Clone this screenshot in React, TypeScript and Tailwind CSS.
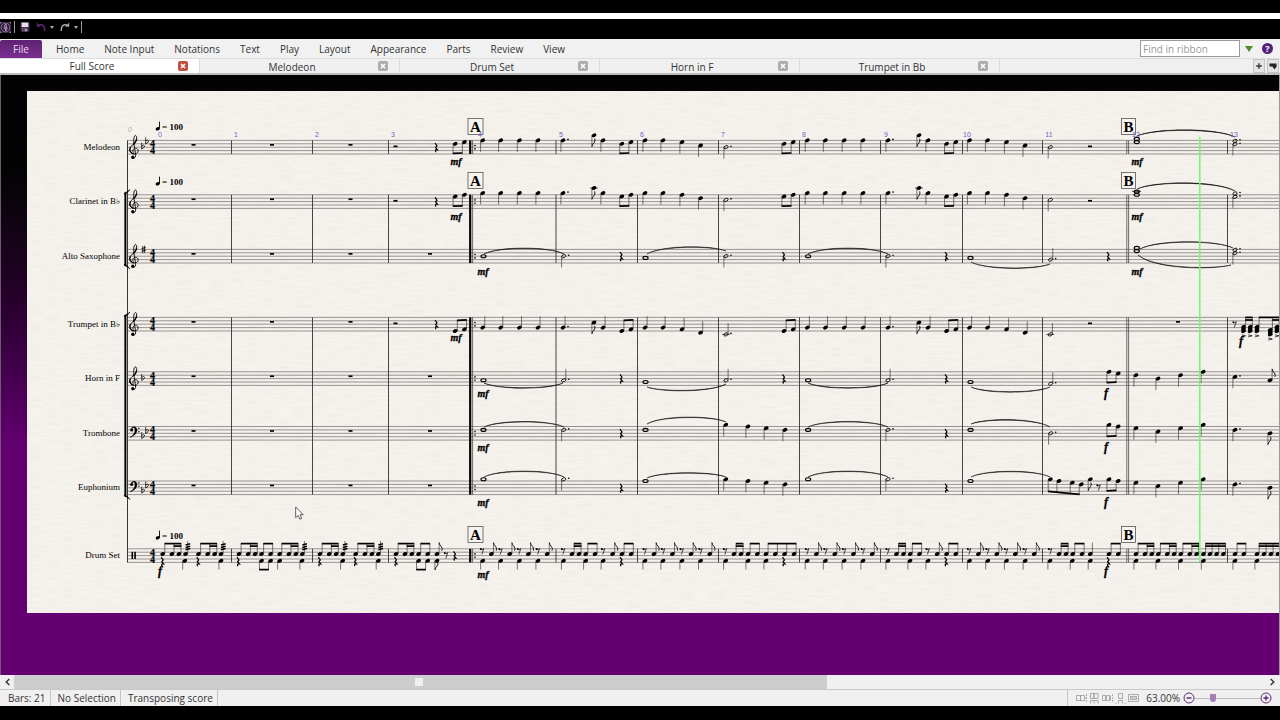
import { useState, type ReactNode } from 'react';
import { Plus } from 'lucide-react';

const MENUS = ['Home', 'Note Input', 'Notations', 'Text', 'Play', 'Layout', 'Appearance', 'Parts', 'Review', 'View'];
const TABS = ['Full Score', 'Melodeon', 'Drum Set', 'Horn in F', 'Trumpet in Bb'];

// Half the distance between two staff lines
const STEP = 1.7;

interface Staff {
  name: string;
  top: number;
  clef: 'treble' | 'bass' | 'drum';
}

const STAVES: Staff[] = [
  { name: 'Melodeon', top: 140.4, clef: 'treble' },
  { name: 'Clarinet in B♭', top: 194.8, clef: 'treble' },
  { name: 'Alto Saxophone', top: 249.4, clef: 'treble' },
  { name: 'Trumpet in B♭', top: 317.4, clef: 'treble' },
  { name: 'Horn in F', top: 371.8, clef: 'treble' },
  { name: 'Trombone', top: 426.5, clef: 'bass' },
  { name: 'Euphonium', top: 481, clef: 'bass' },
  { name: 'Drum Set', top: 548.8, clef: 'drum' },
];
const [MEL, CLA, ALT, TRP, HRN, TBN, EUP, DRM] = STAVES.map((s) => s.top);

const GROUPS = [
  [MEL, MEL],
  [CLA, ALT],
  [TRP, EUP],
  [DRM, DRM],
];
const BARLINES = [231.5, 312.5, 388.5, 556, 637.5, 718.5, 799.5, 880.5, 962.5, 1042.5, 1227.5];
const BAR_NUMBERS = [160, 236, 317, 393, 480, 561, 642, 723, 804, 886, 967, 1049, 1136, 1234];

type Dir = 'up' | 'down';

interface NoteProps {
  x: number;
  y: number;
  dir?: Dir;
  hollow?: boolean;
  whole?: boolean;
  dot?: boolean;
  flag?: boolean;
  end?: number;
  ledger?: boolean;
}

function Note({ x, y, dir, hollow, whole, dot, flag, end, ledger }: NoteProps) {
  const side = dir === 'up' ? 1 : -1;
  const sx = x + side * 2.1;
  const tip = end ?? y - side * 11.4;
  return (
    <g>
      {whole ? (
        <ellipse cx={x + 0.5} cy={y} rx={2.6} ry={1.5} fill="none" stroke="#000" strokeWidth={1.1} />
      ) : (
        <ellipse
          cx={x}
          cy={y}
          rx={hollow ? 2.3 : 2.5}
          ry={hollow ? 1.4 : 1.8}
          transform={`rotate(-24 ${x} ${y})`}
          fill={hollow ? 'none' : '#000'}
          stroke="#000"
          strokeWidth={hollow ? 0.8 : 0}
        />
      )}
      {dir && <path d={`M${sx} ${y}V${tip}`} stroke="#222" strokeWidth={0.6} />}
      {dot && <circle cx={x + 5} cy={y - 1} r={0.8} />}
      {flag && (
        <path
          d={`M${sx} ${tip}q0.2 ${side * 2.2} 2.2 ${side * 4}q1.4 ${side * 1.6} 0.6 ${side * 4}`}
          fill="none"
          stroke="#000"
          strokeWidth={0.9}
        />
      )}
      {ledger && <path d={`M${x - 4} ${y}h8`} stroke="#000" strokeWidth={0.6} />}
    </g>
  );
}

function Beam({ x1, x2, y1, y2 = y1 }: { x1: number; x2: number; y1: number; y2?: number }) {
  return <path d={`M${x1} ${y1}L${x2} ${y2}`} stroke="#000" strokeWidth={1.7} />;
}

function Slur({ x1, y1, x2, y2, peak }: { x1: number; y1: number; x2: number; y2: number; peak: number }) {
  const c = (4 * peak - (y1 + y2) / 2) / 3;
  const a = x1 + (x2 - x1) * 0.18;
  const b = x2 - (x2 - x1) * 0.18;
  return (
    <path
      d={`M${x1} ${y1}C${a} ${c} ${b} ${c} ${x2} ${y2}C${b} ${c - 0.7} ${a} ${c - 0.7} ${x1} ${y1}`}
      fill="#111"
      stroke="#111"
      strokeWidth={0.5}
    />
  );
}

function QuarterRest({ x, y }: { x: number; y: number }) {
  return (
    <path
      d={`M${x - 1} ${y - 4.2}l2 2.8l-1.4 1.8l1.8 2.2q-3 -0.6 -1.4 2.4`}
      fill="none"
      stroke="#000"
      strokeWidth={1.2}
    />
  );
}

function EighthRest({ x, y }: { x: number; y: number }) {
  return (
    <g>
      <circle cx={x - 1.2} cy={y - 1.8} r={0.95} />
      <path d={`M${x - 1.4} ${y - 1.2}q2 0.6 3.2 -1.1l-2 6`} fill="none" stroke="#000" strokeWidth={0.7} />
    </g>
  );
}

function Rest({ x, y }: { x: number; y: number }) {
  return <rect x={x - 2} y={y} width={4} height={1.7} />;
}

function Flat({ x, y }: { x: number; y: number }) {
  return <path d={`M${x - 1.3} ${y - 4.5}v6.4q3 -1.6 2.9 -3.2q-0.6 -1.4 -2.9 0`} fill="none" stroke="#000" strokeWidth={0.75} />;
}

function Sharp({ x, y }: { x: number; y: number }) {
  return (
    <path
      d={`M${x - 0.8} ${y - 3.4}v7.2M${x + 1} ${y - 3.8}v7.2M${x - 2} ${y - 0.8}l4.2 -1M${x - 2} ${y + 1.8}l4.2 -1`}
      stroke="#000"
      strokeWidth={0.8}
    />
  );
}

function Clef({ kind, top }: { kind: Staff['clef']; top: number }) {
  if (kind === 'treble') {
    return (
      <g transform={`translate(134 ${top + 10.2})`} fill="none" stroke="#000" strokeWidth={0.9}>
        <path d="M-0.6 2.1C-2 0.4 -0.6 -2.5 1.6 -2.4C5.4 -2 5 3.3 0.5 3.4C-3.6 3.4 -5.4 -0.4 -3.4 -3.6C-1.4 -6.4 2.8 -8.6 2.7 -12.4C2.5 -15.8 0.9 -16 -0 -13C-1 -9.4 0.8 -2 1.6 4C2 7.8 -1 8.6 -2.4 7.2" />
        <path d="M-3.6 -3.2C-5 -0.6 -3.6 2.6 -0.4 3.2M-0.8 -5.8C1 -7.6 2.6 -9.4 2.6 -11.8" strokeWidth={1.2} />
        <circle cx={-1.2} cy={6.6} r={1.6} fill="#000" stroke="none" />
      </g>
    );
  }
  if (kind === 'bass') {
    return (
      <g transform={`translate(130 ${top})`}>
        <circle cx={1.7} cy={3.6} r={1.5} />
        <path d="M1 3C1 -0.6 7.4 -1 7 4C6.6 7.6 3.6 9.6 0 11C3.4 8.6 4.9 6.6 5 3.8C5.1 0.6 3 0.2 1 3Z" stroke="#000" strokeWidth={0.4} />
        <circle cx={8.9} cy={1.8} r={0.7} />
        <circle cx={8.9} cy={5.2} r={0.7} />
      </g>
    );
  }
  return (
    <g>
      <rect x={131.5} y={top + 3} width={1.6} height={7.2} />
      <rect x={134.3} y={top + 3} width={1.6} height={7.2} />
    </g>
  );
}

function Dynamic({ x, y, children }: { x: number; y: number; children: ReactNode }) {
  return (
    <text
      x={x}
      y={y}
      textAnchor="middle"
      stroke="#000"
      strokeWidth={0.3}
      className={`font-['Liberation_Serif',serif] font-bold italic ${children === 'f' ? 'text-[12px]' : 'text-[10px]'}`}
    >
      {children}
    </text>
  );
}

function Tempo({ y }: { y: number }) {
  return (
    <g>
      <ellipse cx={157.8} cy={y - 1.2} rx={2.2} ry={1.6} transform={`rotate(-24 157.8 ${y - 1.2})`} />
      <path d={`M159.5 ${y - 1.4}v-7`} stroke="#000" strokeWidth={0.9} />
      <text x={162} y={y} className="font-['Liberation_Serif',serif] text-[9px] font-bold">
        = 100
      </text>
    </g>
  );
}

function Rehearsal({ x, y, w, children }: { x: number; y: number; w: number; children: ReactNode }) {
  return (
    <g>
      <rect x={x - w / 2} y={y} width={w} height={16} fill="#f7f4ef" stroke="#555" strokeWidth={0.8} />
      <text x={x} y={y + 13} textAnchor="middle" className="font-['Liberation_Serif',serif] text-[15px] font-bold">
        {children}
      </text>
    </g>
  );
}

// Two beamed eighths with a common beam height
function Pair({ x, top, steps, dir, beam }: { x: number; top: number; steps: number[]; dir: Dir; beam: number }) {
  const d = dir === 'up' ? 2.1 : -2.1;
  return (
    <g>
      <Note x={x} y={top + steps[0] * STEP} dir={dir} end={beam} />
      <Note x={x + 9.2} y={top + steps[1] * STEP} dir={dir} end={beam} />
      <Beam x1={x + d - 0.3} x2={x + 9.5 + d} y1={beam} y2={dir === 'up' ? beam - 0.6 : beam - 0.4} />
    </g>
  );
}

// Melodeon, clarinet and trumpet all carry the tune at different heights
function Melody({ top, shift, dir }: { top: number; shift: number; dir: Dir }) {
  const y = (s: number) => top + (s + shift) * STEP;
  const beam = dir === 'up' ? top + 3 : top + 13 + shift * 1.6;
  const pair = (x: number) => <Pair key={x} x={x} top={top} steps={[2 + shift, 1 + shift]} dir={dir} beam={beam} />;
  return (
    <g>
      <Rest x={395.5} y={top + 5.1} />
      <QuarterRest x={436} y={top + 6.8} />
      {[455.2, 621.8, 784, 946.6].map(pair)}
      {[482.7, 500.7, 519.4, 538, 645, 663, 807.3, 825.4, 844.2, 863, 969.5, 987.5].map((x) => (
        <Note key={x} x={x} y={y(0)} dir={dir} />
      ))}
      {[563, 888].map((x) => (
        <g key={x}>
          <Note x={x} y={y(0)} dir={dir} dot />
          <Note x={x + 31} y={y(-3)} dir="down" flag ledger={shift === -1} />
          <Note x={x + 40} y={y(0)} dir={dir} />
        </g>
      ))}
      {[682, 1006.5].map((x) => (
        <g key={x}>
          <Note x={x} y={y(1)} dir={dir} />
          <Note x={x + 18.6} y={y(3)} dir={dir} />
        </g>
      ))}
      <Note x={726} y={y(4)} dir={dir} hollow dot ledger={shift === 6} />
      <Note x={1050.3} y={y(4)} dir={dir} hollow ledger={shift === 6} />
      <Rest x={1090} y={top + 5.1} />
    </g>
  );
}

interface HarmonyProps {
  top: number;
  steps: number[];
  dirs: Dir[];
  rests?: number[];
}

// Whole notes tied over to dotted halves
function Harmony({ top, steps, dirs, rests = [621, 783.5, 946] }: HarmonyProps) {
  const xs = [483, 563.7, 645, 726, 807.6, 888, 970, 1050.7];
  return (
    <g>
      {xs.map((x, i) =>
        steps[i] === 99 ? null : i % 2 === 0 ? (
          <Note key={x} x={x} y={top + steps[i] * STEP} whole />
        ) : (
          <Note key={x} x={x} y={top + steps[i] * STEP} dir={dirs[(i - 1) / 2]} hollow dot />
        ),
      )}
      {rests.map((x) => (
        <QuarterRest key={x} x={x} y={top + 6.8} />
      ))}
    </g>
  );
}

function Quarters({ top, notes }: { top: number; notes: number[][] }) {
  return (
    <g>
      {notes.map(([x, s]) => (
        <Note key={x} x={x} y={top + s * STEP} dir="down" />
      ))}
    </g>
  );
}

const HI = DRM + 5.2;
const LO = DRM + 12;
const DRUM_BEAM = 543.6;

// Beamed hits above the staff; `sixteenth` is the index where the second beam starts
function Hits({ xs, sixteenth }: { xs: number[]; sixteenth?: number }) {
  const last = xs[xs.length - 1] + 2.4;
  return (
    <g>
      {xs.map((x) => (
        <Note key={x} x={x} y={HI} dir="up" end={DRUM_BEAM} />
      ))}
      <Beam x1={xs[0] + 1.8} x2={last} y1={DRUM_BEAM} />
      {sixteenth !== undefined && <Beam x1={xs[sixteenth] + 1.8} x2={last} y1={DRUM_BEAM + 2.5} />}
    </g>
  );
}

function Tremolo({ x }: { x: number }) {
  return (
    <g>
      <Note x={x} y={HI} dir="up" end={541} />
      <path d={`M${x} 545l4.6 -1.2M${x} 547.4l4.6 -1.2M${x} 549.8l4.6 -1.2`} stroke="#000" strokeWidth={1.5} />
    </g>
  );
}

function Drums() {
  const kicks = [
    184.8, 221, 279.7, 302, 342.7, 378.3, 482.7, 500.7, 519.4, 538, 563.5, 585.7, 603.2, 645, 663, 682, 700.6, 725.7, 748, 766,
    807.3, 825.4, 844.2, 863, 888, 910, 928, 969.5, 987.8, 1006.5, 1025.2, 1050, 1072.3, 1090.3, 1136, 1158, 1180.6, 1203.4, 1235, 1257,
  ];
  return (
    <g>
      {[162.7, 198.5, 239, 279.7, 320, 355.7].map((x) => (
        <Hits key={x} xs={[x, x + 9.2, x + 16.2]} sixteenth={1} />
      ))}
      {[185.6, 221, 302.3, 342.8, 378.4].map((x) => (
        <Tremolo key={x} x={x} />
      ))}
      <Hits xs={[396, 405, 411.8]} sixteenth={1} />
      {[261.5, 418.6].map((x) => (
        <g key={x}>
          <Hits xs={[x, x + 9.1]} />
          <Note x={x} y={LO} dir="down" end={569.6} />
          <Note x={x + 9.1} y={LO} dir="down" end={569.6} />
          <Beam x1={x - 2.4} x2={x + 7.3} y1={569.6} />
        </g>
      ))}
      <Note x={437} y={HI} dir="up" flag />
      <Note x={437} y={LO} dir="down" flag end={570} />
      <EighthRest x={446} y={DRM + 6} />
      <QuarterRest x={454.5} y={DRM + 6.8} />
      {[162.2, 197.7, 238, 319.3, 355, 395.5, 621, 783.5, 945.7, 1108].map((x) => (
        <QuarterRest key={x} x={x} y={DRM + 12.5} />
      ))}
      {[482, 644.6, 807, 969].map((x) =>
        [0, 18.4, 37, 55.8].map((d) => (
          <g key={x + d}>
            <EighthRest x={x + d} y={DRM + 2} />
            <Note x={x + d + 9.4} y={HI} dir="up" flag />
          </g>
        )),
      )}
      {[563, 725, 887.5, 1050].map((x) => (
        <g key={x}>
          <EighthRest x={x} y={DRM + 2} />
          <Hits xs={[x + 9, x + 16]} sixteenth={0} />
          <Hits xs={x === 725 ? [748, 757.3] : [x + 22.7, x + 32]} />
        </g>
      ))}
      <Hits xs={[766, 775.3, 784.6, 794]} />
      {[603, 927.6].map((x) => (
        <g key={x}>
          <EighthRest x={x} y={DRM + 2} />
          <Note x={x + 9.6} y={HI} dir="up" flag />
          <Hits xs={[x + 19, x + 28.2]} />
        </g>
      ))}
      <Note x={1090.3} y={HI} dir="up" />
      <Hits xs={[1109, 1118.3]} />
      {[1136, 1158.3, 1180.8].map((x) => (
        <Hits key={x} xs={[x, x + 9, x + 15.8]} sixteenth={1} />
      ))}
      <Hits xs={[1203.5, 1210, 1216.6, 1223.4]} sixteenth={0} />
      <Hits xs={[1235, 1243.8]} />
      <Hits xs={[1257, 1264, 1271, 1278]} sixteenth={0} />
      {kicks.map((x) => (
        <Note key={x} x={x} y={LO} dir="down" end={569.6} />
      ))}
    </g>
  );
}

function Bracket({ y1, y2 }: { y1: number; y2: number }) {
  return (
    <g>
      <rect x={124.4} y={y1} width={2} height={y2 - y1} />
      <path d={`M124.4 ${y1 + 0.5}q2 -0.8 5.6 -3.4q-2.4 3.6 -5.6 4.6zM124.4 ${y2 - 0.5}q2 0.8 5.6 3.4q-2.4 -3.6 -5.6 -4.6z`} stroke="#000" strokeWidth={0.5} />
    </g>
  );
}

function Score() {
  return (
    <svg role="img" aria-label="Full score" className="block h-[522px] w-full">
      <filter id="grain" x="0" y="0" width="100%" height="100%">
        <feTurbulence type="fractalNoise" baseFrequency="0.06 0.45" numOctaves={2} seed={4} />
        <feColorMatrix values="0 0 0 0 0.72  0 0 0 0 0.69  0 0 0 0 0.64  0.9 0 0 0 -0.3" />
      </filter>
      <rect width="100%" height="100%" filter="url(#grain)" opacity={0.5} />

      <g transform="translate(-27 -91)">
        {STAVES.map(({ name, top, clef }) => (
          <g key={name}>
            <text x={120} y={Math.round(top + 9.4)} textAnchor="end" className="font-['Liberation_Serif',serif] text-[9px]">
              {name}
            </text>
            {[0, 1, 2, 3, 4].map((i) => (
              <path key={i} d={`M127.5 ${top + i * 3.4}H4000`} stroke="#555" strokeWidth={0.6} />
            ))}
            <Clef kind={clef} top={top} />
            <text y={top + 6.8} textAnchor="middle" className="font-['Liberation_Serif',serif] text-[10px] font-bold" stroke="#000" strokeWidth={0.2}>
              <tspan x={152.6}>4</tspan>
              <tspan x={152.6} dy={7}>4</tspan>
            </text>
            {clef !== 'drum' && [193.5, 272, 350.5].map((x) => <Rest key={x} x={x} y={top + 3.6} />)}
          </g>
        ))}

        {/* Key signatures */}
        <Flat x={143} y={MEL + 6.8} />
        <Flat x={147} y={MEL + 1.7} />
        <Sharp x={143.6} y={ALT} />
        <Flat x={143} y={HRN + 6.8} />
        {[TBN, EUP].map((top) => (
          <g key={top}>
            <Flat x={143} y={top + 10.2} />
            <Flat x={147} y={top + 5.1} />
          </g>
        ))}

        {/* Barlines */}
        <path d={`M127.5 ${MEL}V${DRM + 13.6}`} stroke="#222" strokeWidth={0.9} />
        <Bracket y1={192.5} y2={266} />
        <Bracket y1={315} y2={496.5} />
        {GROUPS.map(([from, to]) => (
          <g key={from} stroke="#333">
            {BARLINES.map((x) => (
              <path key={x} d={`M${x} ${from}V${to + 13.6}`} strokeWidth={0.9} />
            ))}
            <path d={`M470.2 ${from}V${to + 13.6}`} stroke="#000" strokeWidth={2.2} />
            <path d={`M472.6 ${from}V${to + 13.6}M1126.8 ${from}V${to + 13.6}M1128.6 ${from}V${to + 13.6}`} strokeWidth={0.7} />
          </g>
        ))}
        {STAVES.map(({ top }) => (
          <g key={top}>
            <circle cx={475} cy={top + 5.1} r={0.8} />
            <circle cx={475} cy={top + 8.5} r={0.8} />
          </g>
        ))}

        <Melody top={MEL} shift={0} dir="down" />
        <Melody top={CLA} shift={-1} dir="down" />
        <Melody top={TRP} shift={6} dir="up" />

        {/* Bars 12 and 13 in the upper winds */}
        {[MEL, CLA - STEP, ALT].map((top) => (
          <g key={top}>
            <Note x={1136.3} y={top - 1.5} whole />
            <Note x={1136.3} y={top + 1.7} whole />
            <Note x={1235} y={top + 0.4} hollow dot />
            <Note x={1235} y={top + 3.8} dir="down" hollow dot />
          </g>
        ))}
        <path d={`M1132 ${CLA - 3.4}h9`} stroke="#000" strokeWidth={0.7} />
        <Slur x1={1137} y1={136} x2={1235} y2={137} peak={130.4} />
        <Slur x1={1137} y1={189} x2={1235} y2={191} peak={183.4} />
        <Slur x1={1140} y1={249} x2={1233} y2={248} peak={242.2} />
        <Slur x1={1138} y1={255} x2={1231} y2={265} peak={267.4} />

        <Harmony top={ALT} steps={[4, 4, 5, 4, 4, 4, 5, 6]} dirs={['down', 'down', 'down', 'up']} rests={[621, 783.5, 946, 1108]} />
        <Rest x={430} y={ALT + 3.6} />
        <Slur x1={484} y1={254} x2={564} y2={254} peak={248.6} />
        <Slur x1={647} y1={254} x2={726} y2={251} peak={247.4} />
        <Slur x1={808} y1={254} x2={888} y2={254} peak={248.6} />
        <Slur x1={971} y1={262} x2={1050} y2={264} peak={268.4} />

        <Harmony top={HRN} steps={[5, 5, 6, 5, 5, 5, 6, 7]} dirs={['up', 'up', 'up', 'up']} />
        <Slur x1={484} y1={383} x2={563} y2={383} peak={388.2} />
        <Slur x1={647} y1={387} x2={726} y2={384} peak={390.8} />
        <Slur x1={808} y1={383} x2={888} y2={383} peak={388.2} />
        <Slur x1={971} y1={387} x2={1050} y2={387} peak={392.2} />
        <Pair x={1109} top={HRN} steps={[0, 1]} dir="down" beam={HRN + 10.8} />
        <Quarters top={HRN} notes={[[1136, 2], [1158, 4], [1180.6, 2], [1203.2, 0]]} />
        <Note x={1235} y={HRN + 5.1} dir="down" dot />
        <Note x={1270} y={HRN + 8.5} dir="up" flag />

        <Harmony top={TBN} steps={[2, 2, 2, 99, 2, 2, 2, 4]} dirs={['down', 'down', 'down', 'down']} rests={[621, 946]} />
        <Slur x1={484} y1={427} x2={564} y2={427} peak={422} />
        <Slur x1={647} y1={424} x2={726} y2={422} peak={417.6} />
        <Slur x1={808} y1={427} x2={888} y2={427} peak={422} />
        <Slur x1={971} y1={424} x2={1050} y2={427} peak={420.2} />
        <Pair x={1109} top={TBN} steps={[-1, 0]} dir="down" beam={TBN + 9.8} />
        <Quarters top={TBN} notes={[[725.8, -1], [748, 0], [766.2, 1], [785, 2], [1136, 1], [1158, 3], [1180.6, 1], [1203.2, -1]]} />
        <Note x={1235} y={TBN + 3.4} dir="down" dot />
        <Note x={1270} y={TBN + 6.8} dir="down" flag />

        <Harmony top={EUP} steps={[-1, -1, 0, 99, -1, -1, 0, 99]} dirs={['down', 'down', 'down', 'down']} rests={[621, 946]} />
        <Slur x1={484} y1={477} x2={564} y2={477} peak={471.6} />
        <Slur x1={647} y1={478} x2={726} y2={477} peak={473.2} />
        <Slur x1={808} y1={477} x2={888} y2={477} peak={471.6} />
        <Slur x1={971} y1={477} x2={1050} y2={477} peak={471.8} />
        <Note x={1050.3} y={479.3} dir="down" end={491.3} />
        <Note x={1059} y={481} dir="down" end={492.3} />
        <Note x={1072.3} y={482.7} dir="down" end={493.4} />
        <Note x={1081.3} y={484.4} dir="down" end={494.3} />
        <Beam x1={1048} x2={1079.6} y1={491.3} y2={494.3} />
        <Note x={1090.3} y={479.3} dir="down" flag />
        <EighthRest x={1098.5} y={487} />
        <Pair x={1109} top={EUP} steps={[-1, 0]} dir="down" beam={EUP + 9.8} />
        <Quarters top={EUP} notes={[[725.8, -1], [748, 0], [766.2, 1], [785, 2], [1136, 1], [1158, 3], [1180.6, 1], [1203.2, -1]]} />
        <Note x={1235} y={EUP + 3.4} dir="down" dot />
        <Note x={1270} y={EUP + 6.8} dir="down" flag />
        {[HRN, TBN, EUP].map((top) => (
          <Rest key={top} x={430} y={top + 3.6} />
        ))}

        {/* Trumpet entry in bar 13 */}
        <Rest x={1178} y={TRP + 3.6} />
        <EighthRest x={1234.5} y={TRP + 6.5} />
        {[1243.5, 1250.2, 1257, 1270.3, 1277].map((x) => {
          const low = x === 1270.3 ? 3.2 : 0;
          return (
            <g key={x}>
              <Note x={x} y={TRP + 9.4 + low} dir="up" end={TRP} />
              <Note x={x} y={TRP + 11.6 + low} />
              <Note x={x} y={TRP + 13.8 + low} />
              <path d={`M${x - 2} ${TRP + 17.4 + low}l4 1l-4 1`} fill="none" stroke="#000" strokeWidth={0.7} />
            </g>
          );
        })}
        <Beam x1={1245.3} x2={1252.6} y1={TRP} />
        <Beam x1={1245.3} x2={1252.6} y1={TRP + 2.6} />
        <Beam x1={1258.8} x2={1290} y1={TRP} />
        <Beam x1={1272.2} x2={1290} y1={TRP + 2.6} />

        <Drums />

        <Dynamic x={456} y={165}>mf</Dynamic>
        <Dynamic x={456} y={220}>mf</Dynamic>
        <Dynamic x={456} y={341}>mf</Dynamic>
        {[275, 397, 451, 506, 578].map((y) => (
          <Dynamic key={y} x={483} y={y}>mf</Dynamic>
        ))}
        {[165, 220, 275].map((y) => (
          <Dynamic key={y} x={1137} y={y}>mf</Dynamic>
        ))}
        {[397, 451, 506, 575].map((y) => (
          <Dynamic key={y} x={1106} y={y}>f</Dynamic>
        ))}
        <Dynamic x={160} y={575}>f</Dynamic>
        <Dynamic x={1241} y={345}>f</Dynamic>

        <Tempo y={130} />
        <Tempo y={185} />
        <Tempo y={539} />
        {[118.5, 172.5, 526.5].map((y) => (
          <g key={y}>
            <Rehearsal x={475.5} y={y} w={15}>A</Rehearsal>
            <Rehearsal x={1128.5} y={y} w={14}>B</Rehearsal>
          </g>
        ))}
        <text x={128} y={132} fill="#aaa" className="font-['Liberation_Sans',sans-serif] text-[7px] italic">
          0
        </text>
        {BAR_NUMBERS.map((x, i) => (
          <text key={x} x={x} y={137} textAnchor="middle" fill="#6b62cf" className="font-['Liberation_Sans',sans-serif] text-[7px]">
            {i}
          </text>
        ))}

        {/* Playback line */}
        <path d="M1199.8 137V562" stroke="#6dfa6d" strokeWidth={1.5} />
        {/* Mouse pointer */}
        <path d="M295.7 507v10.6l2.4 -2.2l1.7 3.8l1.9 -0.8l-1.7 -3.7h3.2z" fill="#fff" stroke="#333" strokeWidth={0.8} />
      </g>
    </svg>
  );
}

function ViewIcon({ kind }: { kind: number }) {
  const shapes = [
    'M0.5 2.5h4v5h-4zM4.5 2.5h4v5h-4zM10.5 1v2M10.5 4v2M10.5 7v2M9 5h1',
    'M1.5 0.5h3.5v5h-3.5zM5 0.5h4v5h-4zM1.5 10.5v-3h3.5v3M9 10.5v-3h-4',
    'M0.5 2.5h3v5h-3zM4.5 2.5h3v5h-3zM10.5 1v2M10.5 4v2M10.5 7v2M8.5 2.5v5',
    'M3.5 0.5h4v5h-4zM3.5 10.5v-3h4v3M0.5 10.5h1M9.5 10.5h1',
    'M0.5 1.5h10v7h-10zM2.5 3.5h6v3h-6zM2 5h7',
  ];
  return (
    <svg viewBox="0 0 11 11" className="h-[11px] w-[11px]" fill="none" stroke="#999" strokeWidth={0.8}>
      <path d={shapes[kind]} />
    </svg>
  );
}

function HistoryIcon({ redo }: { redo?: boolean }) {
  return (
    <svg viewBox="0 0 10 10" className="h-[10px] w-[10px]" fill="none">
      {redo ? (
        <g stroke="#aaa">
          <path d="M1.5 9C0.4 4 4 1.6 8 3.4" strokeWidth={1.4} />
          <path d="M9.2 0.6v4.2h-4z" fill="#aaa" stroke="none" />
        </g>
      ) : (
        <g stroke="#5d2a72">
          <path d="M8.3 9C9.6 4 6 1.6 2.4 3.4" strokeWidth={1.4} />
          <path d="M0.8 0.6v4.2h4z" fill="#5d2a72" stroke="none" />
        </g>
      )}
    </svg>
  );
}

function Caret() {
  return (
    <svg viewBox="0 0 4 3" className="h-[3px] w-1">
      <path d="M0 0h4l-2 3z" fill="#aaa" />
    </svg>
  );
}

export default function App() {
  const [activeTab, setActiveTab] = useState('Full Score');
  const [query, setQuery] = useState('');
  const [zoom, setZoom] = useState(26);

  return (
    <div className="flex h-screen flex-col overflow-hidden bg-black font-['Open_Sans','Noto_Sans',sans-serif] text-[10px] leading-4 text-[#333]">
      <div className="h-[13px] shrink-0" />
      <div className="h-[6px] shrink-0 bg-white" />

      {/* Quick access bar */}
      <div className="flex h-5 shrink-0 items-center pb-1">
        <svg viewBox="0 0 11 11" className="h-[11px] w-[11px]" fill="none">
          <rect width="11" height="11" fill="#2c1838" />
          <circle cx="5.5" cy="5.5" r="4.4" stroke="#9a86a8" strokeWidth="0.9" />
          <path d="M5.8 2C3.8 4 3.6 7.6 5.8 7.6C8 7.4 7.4 4.6 5.6 5.2M5.8 2C7 4 5.4 7 5.8 9" stroke="#cbb9d6" strokeWidth="0.9" />
          <path d="M0 2V0h2M9 0h2v2M0 9v2h2M9 11h2V9" stroke="#bbb" strokeWidth="0.8" />
        </svg>
        <div className="ml-[3px] h-3 w-px bg-[#999]" />
        <button aria-label="Save" className="ml-[5px]">
          <svg viewBox="0 0 10 10" className="h-[10px] w-[10px]">
            <rect x="0.5" y="0.5" width="9" height="9" fill="#3b2147" />
            <rect x="1.6" y="0.5" width="6.8" height="4.6" fill="#e6dfea" />
            <rect x="2.4" y="6.6" width="5" height="2.9" fill="#a595b0" />
            <rect x="3.2" y="7" width="1.4" height="2.5" fill="#2a1634" />
          </svg>
        </button>
        <button aria-label="Undo" className="ml-[6px]"><HistoryIcon /></button>
        <button aria-label="Undo history" className="ml-1"><Caret /></button>
        <button aria-label="Redo" className="ml-[6px]"><HistoryIcon redo /></button>
        <button aria-label="Redo history" className="ml-1"><Caret /></button>
        <div className="ml-[3px] h-3 w-px bg-[#999]" />
      </div>

      {/* Ribbon */}
      <div className="flex h-[19px] shrink-0 items-center bg-[#f1f1f1]">
        <button className="mt-px h-[18px] w-[42px] rounded-t-xs bg-linear-to-b from-[#5e2273] to-[#7a2f90] text-[#e6d9ec]">File</button>
        <nav className="ml-1 flex">
          {MENUS.map((item) => (
            <button key={item} className="px-[10px]">{item}</button>
          ))}
        </nav>
        <input
          aria-label="Find in ribbon"
          value={query}
          onChange={(e) => setQuery(e.target.value)}
          placeholder="Find in ribbon"
          className="ml-auto h-[17px] w-[100px] border border-[#999] bg-white px-0.5 placeholder:text-[#999]"
        />
        <button aria-label="Ribbon options" className="ml-[5px]">
          <svg viewBox="0 0 8 6" className="h-[6px] w-2">
            <path d="M0 0h8l-4 6z" fill="#4f8a2c" />
          </svg>
        </button>
        <button aria-label="Help" className="mr-[7px] ml-[9px] h-[11px] w-[11px] rounded-full bg-[#52207a] text-[9px] leading-[11px] font-bold text-white">
          ?
        </button>
      </div>

      {/* Document tabs */}
      <div className="flex h-[17px] shrink-0 border-t border-b-2 border-t-[#ddd] border-b-[#bdbdbd] bg-[#efefef]">
        {TABS.map((tab) => {
          const isActive = tab === activeTab;
          return (
            <div
              key={tab}
              className={`flex h-full w-[200px] items-center border-r border-[#ddd] pr-[11px] pl-[6px] ${isActive ? 'bg-white' : 'bg-[#f0f0f0]'}`}
            >
              <button onClick={() => setActiveTab(tab)} className={`flex-1 leading-[14px] ${isActive ? '' : 'pt-px'}`}>
                {tab}
              </button>
              <button
                aria-label={`Close ${tab}`}
                className={`flex h-[10px] w-[10px] items-center justify-center rounded-xs ${isActive ? 'bg-[#c0503e]' : 'bg-[#adadad]'}`}
              >
                <svg viewBox="0 0 6 6" className="h-[6px] w-[6px]" stroke="#fff" strokeWidth={1.6}>
                  <path d="M1 1l4 4M5 1l-4 4" />
                </svg>
              </button>
            </div>
          );
        })}
        <button aria-label="New tab" className="ml-auto flex w-3 items-center justify-center border border-[#c4c4c4] bg-[#e4e4e4]">
          <Plus className="h-2 w-2" strokeWidth={4} />
        </button>
        <button aria-label="Tab list" className="mr-px ml-0.5 flex w-3 items-center justify-center border border-[#c4c4c4] bg-[#e4e4e4]">
          <svg viewBox="0 0 8 7" className="h-[7px] w-2">
            <path d="M0.5 0.5h7v3h-7zM3 3h5l-2.5 3.5z" fill="#222" />
          </svg>
        </button>
      </div>

      {/* Score canvas */}
      <main className="min-h-0 flex-1 overflow-hidden border-x border-l-[#6b5a70] border-r-[#999] bg-linear-to-b from-[#030303] from-15% via-[#26002b] via-37% to-[#640072] to-62% pt-4 pl-[26px]">
        <div className="bg-[#f6f3ee]">
          <Score />
        </div>
      </main>

      {/* Horizontal scrollbar */}
      <div className="flex h-[15px] shrink-0 border-b border-[#c8c8c8] bg-[#f0f0f0]">
        <button aria-label="Scroll left" className="flex w-[14px] items-center justify-center">
          <svg viewBox="0 0 5 8" className="h-2 w-[5px]" fill="none" stroke="#333" strokeWidth={1.4}>
            <path d="M4.3 1L1.2 4l3.1 3" />
          </svg>
        </button>
        <div className="flex flex-1">
          <div className="flex w-[65%] items-center bg-[#cdcdcd]">
            <div className="w-[49.4%]" />
            <div className="h-2 w-2 bg-[#f0f0f0]" />
          </div>
        </div>
        <button aria-label="Scroll right" className="flex w-4 items-center justify-center">
          <svg viewBox="0 0 5 8" className="h-2 w-[5px]" fill="none" stroke="#333" strokeWidth={1.4}>
            <path d="M0.7 1l3.1 3L0.7 7" />
          </svg>
        </button>
      </div>

      {/* Status bar */}
      <footer className="flex h-4 shrink-0 items-stretch bg-[#f0f0f0]">
        <span className="border-r border-[#c6c6c6] pr-1 pl-2">Bars: 21</span>
        <span className="border-r border-[#c6c6c6] pr-1 pl-[7px]">No Selection</span>
        <span className="border-r border-[#c6c6c6] pr-1 pl-[7px]">Transposing score</span>
        <div className="ml-auto flex items-center border-l border-[#c6c6c6] pl-2">
          <div className="flex gap-0.5">
            {['Panorama', 'Spreads', 'Single row', 'Single column', 'Keyboard'].map((label, i) => (
              <button key={label} aria-label={label}>
                <ViewIcon kind={i} />
              </button>
            ))}
          </div>
          <span className="ml-[7px]">63.00%</span>
          <button aria-label="Zoom out" className="ml-[3px]">
            <svg viewBox="0 0 12 12" className="h-3 w-3" fill="none" stroke="#5a2a72">
              <circle cx="6" cy="6" r="5" />
              <path d="M3.5 6h5" strokeWidth={1.4} />
            </svg>
          </button>
          <input
            type="range"
            aria-label="Zoom"
            value={zoom}
            onChange={(e) => setZoom(Number(e.target.value))}
            className="h-3 w-[65px] appearance-none bg-[linear-gradient(#bbb,#bbb)] bg-[length:100%_1px] bg-center bg-no-repeat [&::-webkit-slider-thumb]:h-2 [&::-webkit-slider-thumb]:w-[6px] [&::-webkit-slider-thumb]:appearance-none [&::-webkit-slider-thumb]:rounded-b-full [&::-webkit-slider-thumb]:bg-[#a27fb5]"
          />
          <button aria-label="Zoom in" className="mr-2">
            <svg viewBox="0 0 12 12" className="h-3 w-3" fill="none" stroke="#5a2a72">
              <circle cx="6" cy="6" r="5" />
              <path d="M3.5 6h5M6 3.5v5" strokeWidth={1.4} />
            </svg>
          </button>
        </div>
      </footer>
      <div className="h-[14px] shrink-0" />
    </div>
  );
}
